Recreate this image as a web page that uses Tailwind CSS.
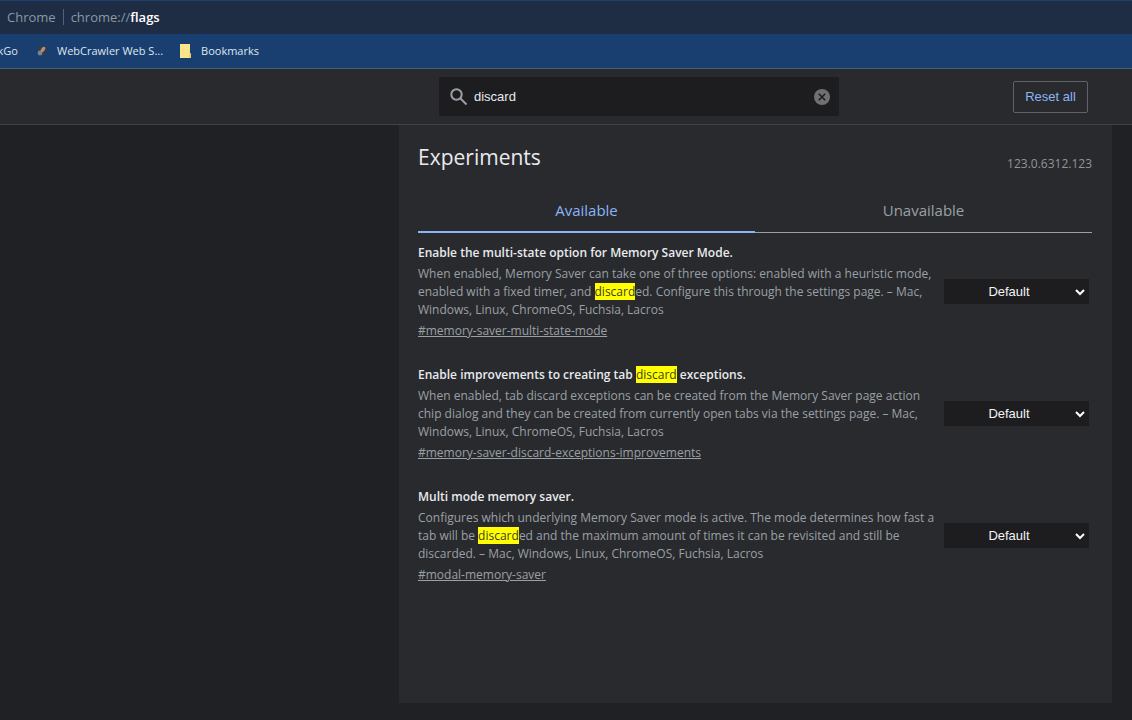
<!DOCTYPE html>
<html lang="en">
<head>
  <meta charset="UTF-8" />
  <meta name="viewport" content="width=device-width, initial-scale=1.0" />
  <title>Experiments</title>
  <script src="https://cdn.jsdelivr.net/npm/@tailwindcss/browser@4"></script>
</head>
<body class="min-h-screen flex flex-col bg-[#202124] text-[#e8eaed] font-['Open_Sans',sans-serif] text-[12px] leading-[18px]">
  <!-- Address bar -->
  <div class="h-[34px] flex items-center pl-[7px] pb-0.5 border-t border-[#1f3f6e] bg-[#1e2d44] text-[13px] text-[#8d97a5]">
    <span>Chrome</span>
    <span class="w-px h-4 mx-[7px] bg-[#566274]"></span>
    <span>chrome://<span class="font-semibold text-white">flags</span></span>
  </div>

  <!-- Bookmarks bar -->
  <nav class="h-[35px] flex items-center overflow-hidden bg-[#193f70] border-b border-[#48607f] text-[11px] text-[#dfe6ee]">
    <a href="#" class="w-[18px] flex justify-end whitespace-nowrap">kGo</a>
    <a href="#" class="flex items-center ml-4">
      <svg class="w-4 h-4 mr-[7px]" viewBox="0 0 16 16">
        <ellipse cx="8" cy="8" rx="5" ry="6" fill="#2a3c58" />
        <circle cx="6" cy="10" r="2.400" fill="#75839b" />
        <ellipse cx="9" cy="6.500" rx="1.800" ry="3" transform="rotate(35 9 6.500)" fill="#c68b5b" />
      </svg>
      WebCrawler Web S...
    </a>
    <a href="#" class="flex items-center ml-[15px]">
      <svg class="w-4 h-4 mr-[7px]" viewBox="0 0 16 16">
        <path d="M2 1h10v9l1 1v4H2z" fill="#fbe48b" />
        <path d="M11 10.500h2V15h-2z" fill="#f0d068" />
      </svg>
      Bookmarks
    </a>
  </nav>

  <!-- Search and reset -->
  <header class="h-14 flex items-center justify-end gap-[174px] pr-11 bg-[#292a2d] border-b border-[#414246]">
    <div class="flex items-center w-[400px] h-[39px] pl-[10px] pr-[9px] rounded-xs bg-[#1d1d20]">
      <svg class="w-5 h-5 shrink-0" viewBox="0 0 20 20" fill="none" stroke="#9aa0a6" stroke-width="2">
        <circle cx="7.500" cy="7.500" r="5.200" />
        <path d="M11.500 11.500L17.500 17.500" />
      </svg>
      <input type="text" id="search" aria-label="Search flags" value="discard" class="flex-1 min-w-0 ml-[5px] bg-transparent outline-none font-['Liberation_Sans',sans-serif] text-[13px] text-[#e8eaed]" />
      <button id="clearBtn" aria-label="Clear search" class="shrink-0">
        <svg class="w-4 h-4" viewBox="0 0 16 16">
          <circle cx="8" cy="8" r="8" fill="#6e7074" />
          <path d="M4.800 4.800L11.200 11.200M11.200 4.800L4.800 11.200" stroke="#1d1d20" stroke-width="1.600" />
        </svg>
      </button>
    </div>
    <button id="resetBtn" class="w-[75px] h-8 border border-[#5f6368] rounded-xs font-['Liberation_Sans',sans-serif] text-[13px] text-[#8ab4f8] whitespace-nowrap">Reset all</button>
  </header>

  <main class="flex-1 flex justify-end pr-5 pb-[17px]">
    <section class="w-full max-w-[713px] pl-[19px] pr-5 pt-4 bg-[#292a2d]">
      <div class="flex items-center justify-between">
        <h1 class="text-[21px] leading-8">Experiments</h1>
        <span class="pt-3.5 text-[#8f959b]">123.0.6312.123</span>
      </div>

      <div role="tablist" class="grid grid-cols-2 mt-4 text-[15px] text-[#9aa0a6]">
        <button role="tab" aria-selected="true" class="h-11 border-b-2 border-[#8ab4f8] text-[#8ab4f8]">Available</button>
        <button role="tab" aria-selected="false" class="h-11 pb-px border-b border-[#9aa0a6]">Unavailable</button>
      </div>

      <div class="flex flex-col gap-[25px] pt-[10px]">
        <div class="flex items-center justify-between pr-[3px]">
          <div>
            <h2 class="font-semibold leading-5">Enable the multi-state option for Memory Saver Mode.</h2>
            <p class="mt-0.5 text-[#9aa0a6]">
              When enabled, Memory Saver can take one of three options: enabled with a heuristic mode,<br />
              enabled with a fixed timer, and <mark class="bg-[#ffff00] text-[#3c3c20]">discard</mark>ed. Configure this through the settings page. – Mac,<br />
              Windows, Linux, ChromeOS, Fuchsia, Lacros
            </p>
            <a href="#memory-saver-multi-state-mode" class="block mt-[3px] underline text-[#9aa0a6]">#memory-saver-multi-state-mode</a>
          </div>
          <div class="relative">
            <select aria-label="Enable the multi-state option for Memory Saver Mode." class="block appearance-none w-[145px] h-[25px] pr-[15px] bg-[#1d1d20] font-['Liberation_Sans',sans-serif] text-[13px] text-center text-[#f1f3f4]">
              <option>Default</option>
              <option>Enabled</option>
              <option>Disabled</option>
            </select>
            <svg class="absolute right-1 top-2 w-[10px] h-[10px] pointer-events-none" viewBox="0 0 10 10" fill="none" stroke="#fff" stroke-width="2"><path d="M1 3L5 7L9 3" /></svg>
          </div>
        </div>

        <div class="flex items-center justify-between pr-[3px]">
          <div>
            <h2 class="font-semibold leading-5">Enable improvements to creating tab <mark class="bg-[#ffff00] font-normal text-[#3c3c20]">discard</mark> exceptions.</h2>
            <p class="mt-0.5 text-[#9aa0a6]">
              When enabled, tab discard exceptions can be created from the Memory Saver page action<br />
              chip dialog and they can be created from currently open tabs via the settings page. – Mac,<br />
              Windows, Linux, ChromeOS, Fuchsia, Lacros
            </p>
            <a href="#memory-saver-discard-exceptions-improvements" class="block mt-[3px] underline text-[#9aa0a6]">#memory-saver-discard-exceptions-improvements</a>
          </div>
          <div class="relative">
            <select aria-label="Enable improvements to creating tab discard exceptions." class="block appearance-none w-[145px] h-[25px] pr-[15px] bg-[#1d1d20] font-['Liberation_Sans',sans-serif] text-[13px] text-center text-[#f1f3f4]">
              <option>Default</option>
              <option>Enabled</option>
              <option>Disabled</option>
            </select>
            <svg class="absolute right-1 top-2 w-[10px] h-[10px] pointer-events-none" viewBox="0 0 10 10" fill="none" stroke="#fff" stroke-width="2"><path d="M1 3L5 7L9 3" /></svg>
          </div>
        </div>

        <div class="flex items-center justify-between pr-[3px]">
          <div>
            <h2 class="font-semibold leading-5">Multi mode memory saver.</h2>
            <p class="mt-0.5 text-[#9aa0a6]">
              Configures which underlying Memory Saver mode is active. The mode determines how fast a<br />
              tab will be <mark class="bg-[#ffff00] text-[#3c3c20]">discard</mark>ed and the maximum amount of times it can be revisited and still be<br />
              discarded. – Mac, Windows, Linux, ChromeOS, Fuchsia, Lacros
            </p>
            <a href="#modal-memory-saver" class="block mt-[3px] underline text-[#9aa0a6]">#modal-memory-saver</a>
          </div>
          <div class="relative">
            <select aria-label="Multi mode memory saver." class="block appearance-none w-[145px] h-[25px] pr-[15px] bg-[#1d1d20] font-['Liberation_Sans',sans-serif] text-[13px] text-center text-[#f1f3f4]">
              <option>Default</option>
              <option>Enabled</option>
              <option>Disabled</option>
            </select>
            <svg class="absolute right-1 top-2 w-[10px] h-[10px] pointer-events-none" viewBox="0 0 10 10" fill="none" stroke="#fff" stroke-width="2"><path d="M1 3L5 7L9 3" /></svg>
          </div>
        </div>
      </div>
    </section>
  </main>
</body>
</html>
